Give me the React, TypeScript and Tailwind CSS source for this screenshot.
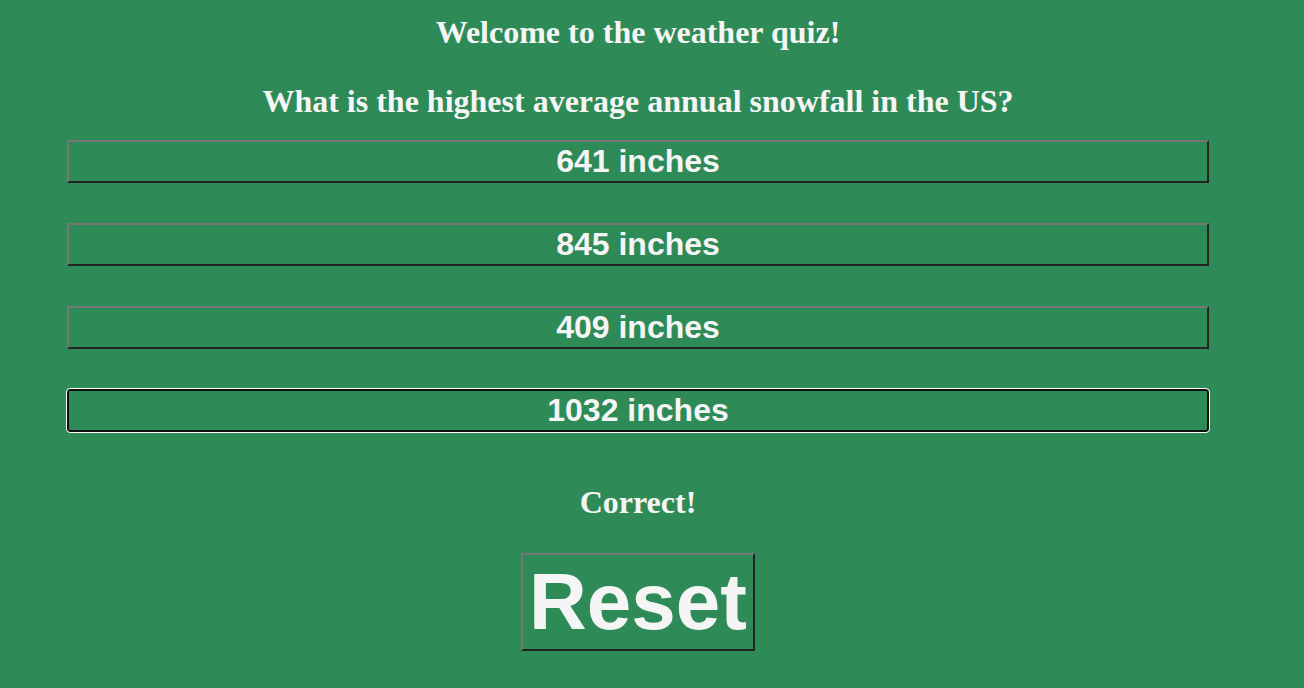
import React from 'react';

const answers = ['641 inches', '845 inches', '409 inches', '1032 inches'];

export default function App() {
  return (
    <div className="min-h-[688px] bg-[#2e8b57] text-[#f5f5f5]">
      <div className="w-[1276px] text-center">
        {/* Titel und Frage */}
        <h1 className="pt-[14px] font-['Liberation_Serif',serif] text-[32px] font-bold leading-[36px]">
          Welcome to the weather quiz!
        </h1>
        <h2 className="mt-[33px] font-['Liberation_Serif',serif] text-[32px] font-bold leading-[36px]">
          What is the highest average annual snowfall in the US?
        </h2>

        {/* Antworten */}
        <div className="mt-[21px] flex flex-col items-center gap-[40px]">
          {answers.map((answer, i) =>
            i === 3 ? (
              <button
                key={answer}
                className="w-[1142px] rounded-[3px] border-2 border-[#101010] bg-[#2e8b57] px-[6px] py-px font-['Liberation_Sans',Arial,sans-serif] text-[32px] font-bold leading-[37px] text-[#f5f5f5] outline outline-1 outline-white"
              >
                {answer}
              </button>
            ) : (
              <button
                key={answer}
                className="w-[1142px] border-2 border-t-[#767676] border-l-[#767676] border-b-[#232323] border-r-[#232323] bg-[#2e8b57] px-[6px] py-px font-['Liberation_Sans',Arial,sans-serif] text-[32px] font-bold leading-[37px] text-[#f5f5f5]"
              >
                {answer}
              </button>
            )
          )}
        </div>

        {/* Ergebnis */}
        <p className="mt-[52px] font-['Liberation_Serif',serif] text-[32px] font-bold leading-[36px]">
          Correct!
        </p>
        <div className="mt-[33px] flex justify-center">
          <button className="border-2 border-t-[#767676] border-l-[#767676] border-b-[#232323] border-r-[#232323] bg-[#2e8b57] px-[6px] py-px font-['Liberation_Sans',Arial,sans-serif] text-[80px] font-bold leading-[92px] text-[#f5f5f5]">
            Reset
          </button>
        </div>
      </div>
    </div>
  );
}
